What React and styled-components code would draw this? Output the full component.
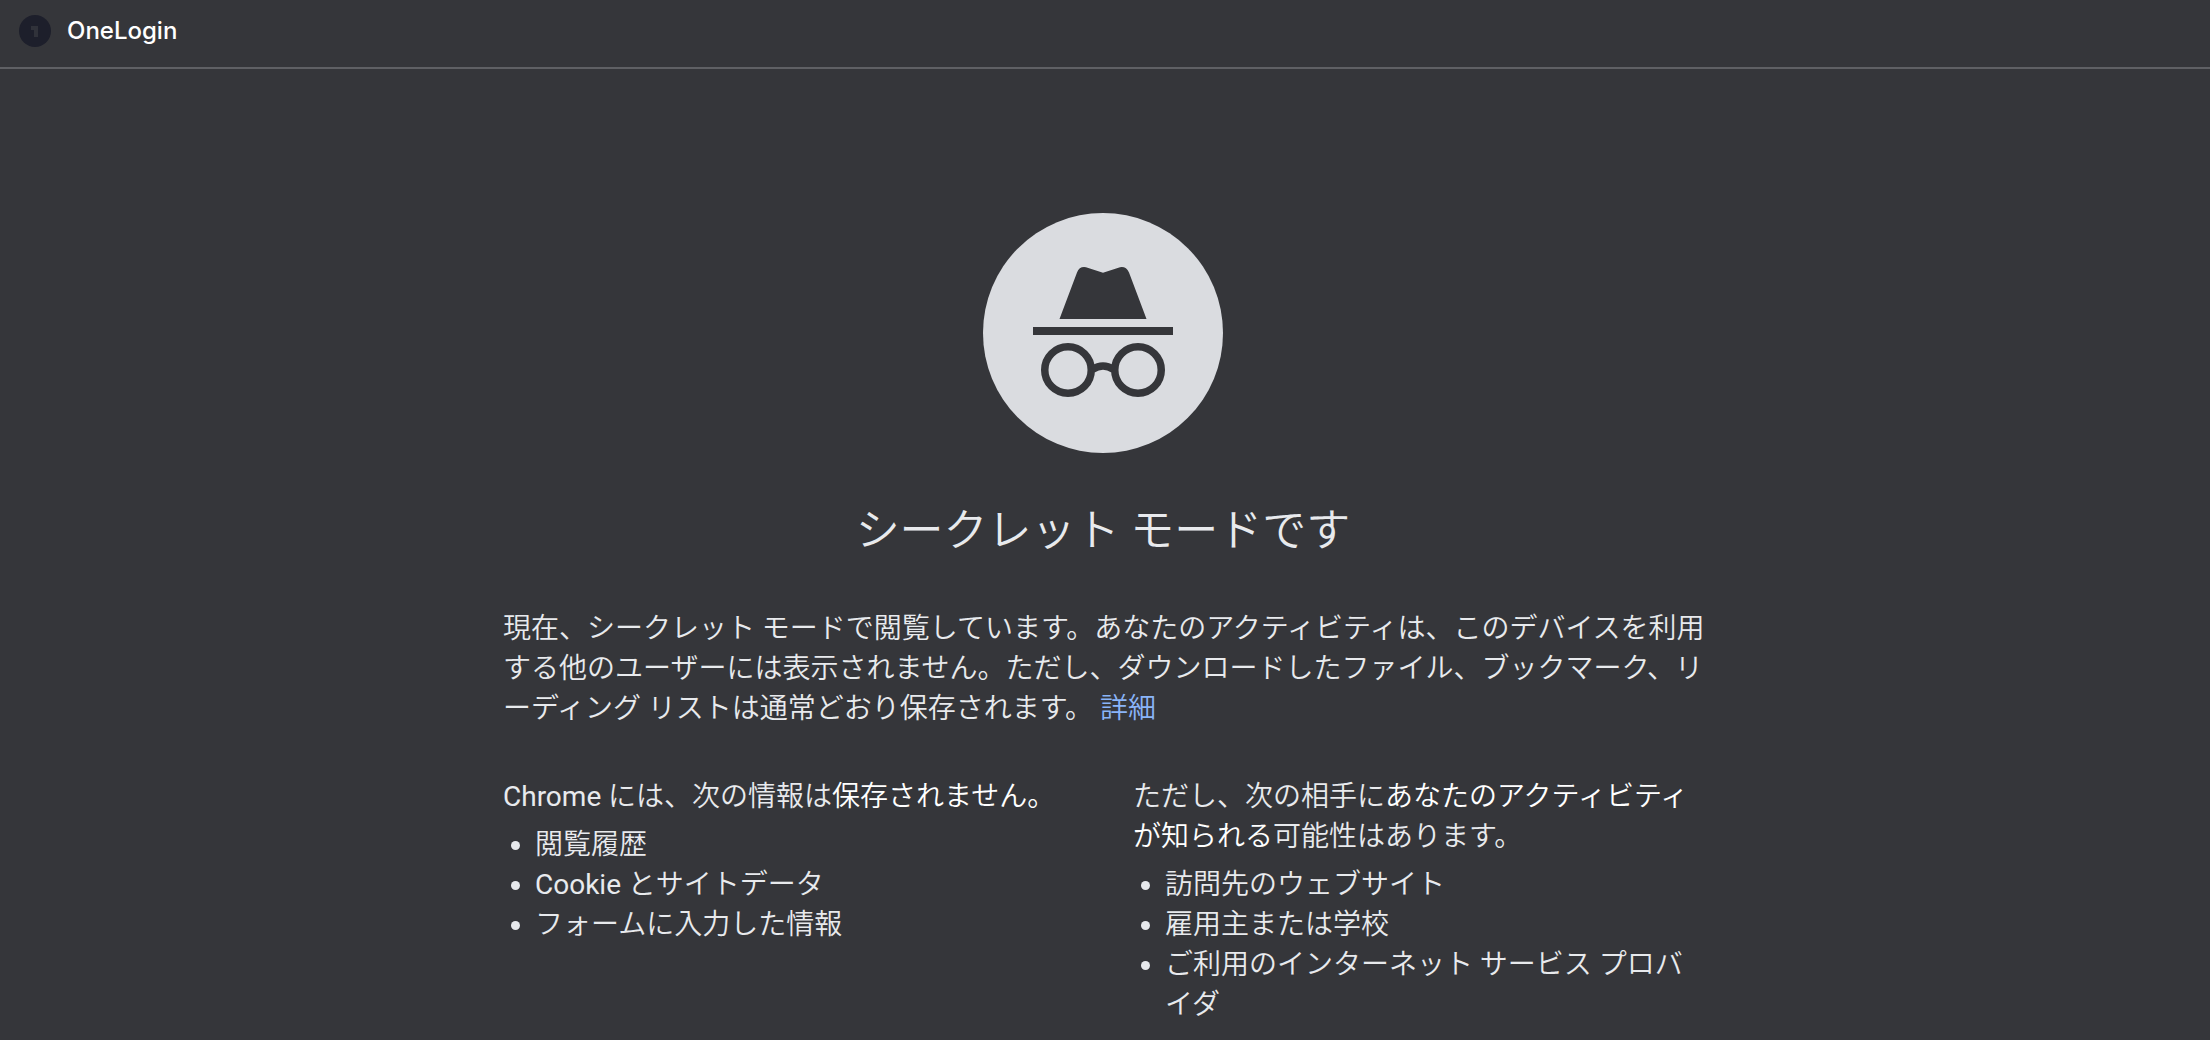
import styled, { createGlobalStyle } from "styled-components"

const GlobalStyle = createGlobalStyle`
    * {
        box-sizing: border-box;
    }

    body {
        margin: 0;
        min-height: 100vh;
        background: #35363a;
        color: #e8eaed;
        font-family: Roboto, "Noto Sans CJK JP", sans-serif;
        font-size: 28px;
        font-weight: 350;
        line-height: 40px;
    }
`

const BookmarkBar = styled.header`
    display: flex;
    align-items: center;
    height: 69px;
    padding: 0 19px 6px;
    border-bottom: 2px solid #5f6064;
`

const Bookmark = styled.a`
    display: flex;
    align-items: center;
    gap: 16px;
    color: #fff;
    font-family: Inter, sans-serif;
    font-size: 24px;
    font-weight: 500;
    line-height: 32px;
    text-decoration: none;
`

const Badge = styled.svg`
    width: 32px;
    height: 32px;
`

const Content = styled.main`
    width: 100%;
    max-width: 1204px;
    margin: 0 auto;
    padding: 144px 4px 0 0;
`

const Incognito = styled.svg`
    display: block;
    width: 240px;
    height: 240px;
    margin: 0 auto;
`

const Title = styled.h1`
    margin: 50px 0;
    color: #e8eaed;
    font-size: 44px;
    font-weight: 350;
    line-height: 56px;
    text-align: center;
`

const Intro = styled.p`
    margin: 0 -12px 48px 0;
    line-break: loose;

    a {
        color: #8ab4f8;
        text-decoration: none;
    }
`

const Columns = styled.div`
    display: grid;
    grid-template-columns: 1fr 1fr;
    gap: 60px;
`

const Column = styled.section`
    p {
        margin: 0 0 8px;
    }

    em {
        color: #fff;
        font-style: normal;
    }

    ul {
        margin: 0;
        padding-left: 32px;
    }
`

const Latin = styled.span`
    font-weight: 400;
`

const columns = [
    {
        latin: "Chrome",
        before: " には、次の情報は",
        strong: "保存されません。",
        after: "",
        items: [
            { text: "閲覧履歴" },
            { latin: "Cookie", text: " とサイトデータ" },
            { text: "フォームに入力した情報" },
        ],
    },
    {
        before: "ただし、次の相手に",
        strong: "あなたのアクティビティが知られる",
        after: "可能性はあります。",
        items: [
            { text: "訪問先のウェブサイト" },
            { text: "雇用主または学校" },
            { text: "ご利用のインターネット サービス プロバイダ" },
        ],
    },
]

export default function App() {
    return (
        <>
            <GlobalStyle />
            <BookmarkBar>
                <Bookmark href="#onelogin">
                    <Badge viewBox="0 0 32 32" aria-hidden="true">
                        <circle cx="16" cy="16" r="16" fill="#1d1f2b" />
                        <path d="M12 11h7v11h-4v-7h-3z" fill="#30323a" />
                    </Badge>
                    OneLogin
                </Bookmark>
            </BookmarkBar>
            <Content lang="ja">
                <Incognito viewBox="0 0 240 240" aria-hidden="true">
                    <circle cx="120" cy="120" r="120" fill="#dadce0" />
                    <g fill="#35363a">
                        <path d="M76.500 106 L94 59.500 Q96.500 53 103 54.200 L120 59.800 L137 54.200 Q143 53 146 59.500 L163.500 106Z" />
                        <path d="M50 114h140v8H50z" />
                    </g>
                    <g fill="none" stroke="#35363a" strokeWidth="7.500">
                        <circle cx="85" cy="157" r="23.250" />
                        <circle cx="155" cy="157" r="23.250" />
                        <path d="M109.500 156.500Q120 149.500 130.500 156.500" />
                    </g>
                </Incognito>
                <Title>シークレット モードです</Title>
                <Intro>
                    現在、シークレット モードで閲覧しています。あなたのアクティビティは、このデバイスを利用する他のユーザーには表示されません。ただし、ダウンロードしたファイル、ブックマーク、リーディング
                    リストは通常どおり保存されます。 <a href="#details">詳細</a>
                </Intro>
                <Columns>
                    {columns.map((column, index) => {
                        return (
                            <Column key={`${index}`}>
                                <p>
                                    {column.latin ? (
                                        <Latin>{column.latin}</Latin>
                                    ) : null}
                                    {column.before}
                                    <em>{column.strong}</em>
                                    {column.after}
                                </p>
                                <ul>
                                    {column.items.map((item) => {
                                        return (
                                            <li key={item.text}>
                                                {item.latin ? (
                                                    <Latin>{item.latin}</Latin>
                                                ) : null}
                                                {item.text}
                                            </li>
                                        )
                                    })}
                                </ul>
                            </Column>
                        )
                    })}
                </Columns>
            </Content>
        </>
    )
}
